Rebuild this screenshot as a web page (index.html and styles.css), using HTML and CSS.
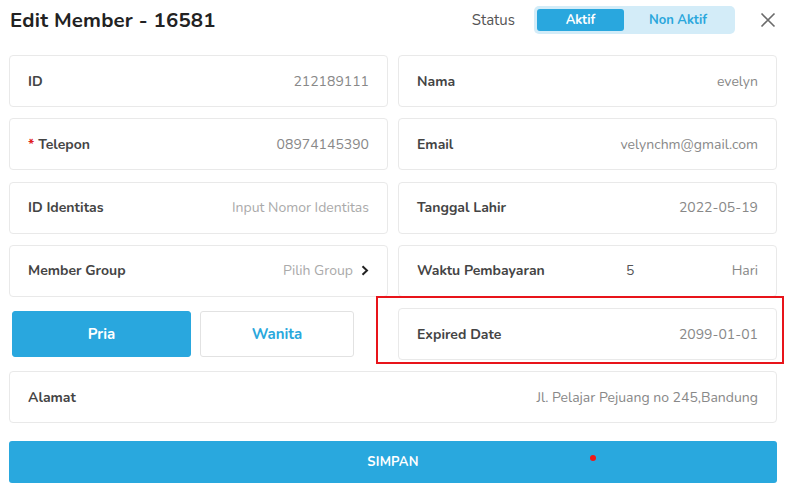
FILE: index.html
```html
<!DOCTYPE html>
<html lang="en">
<head>
  <meta charset="UTF-8">
  <meta name="viewport" content="width=device-width, initial-scale=1.0">
  <link rel="stylesheet" href="styles.css">
  <title>Edit Member</title>
</head>
<body>
  <div id="modal">
    <div class="header">
      <h1 class="title">Edit Member - 16581</h1>
      <div class="status">
        <span class="status-label">Status</span>
        <div class="switch">
          <div class="switch-opt active">Aktif</div>
          <div class="switch-opt">Non Aktif</div>
        </div>
        <svg class="close" width="16" height="16" viewBox="0 0 16 16">
          <path d="M1.5 1.5 L14.5 14.5 M14.5 1.5 L1.5 14.5" stroke="#6b6b6b" stroke-width="1.6" fill="none"/>
        </svg>
      </div>
    </div>

    <div class="form">
      <div class="field"><span class="label">ID</span><span class="value">212189111</span></div>
      <div class="field"><span class="label">Nama</span><span class="value">evelyn</span></div>

      <div class="field"><span class="label"><span class="req">*</span> Telepon</span><span class="value">08974145390</span></div>
      <div class="field"><span class="label">Email</span><span class="value">velynchm@gmail.com</span></div>

      <div class="field"><span class="label">ID Identitas</span><span class="value placeholder">Input Nomor Identitas</span></div>
      <div class="field"><span class="label">Tanggal Lahir</span><span class="value">2022-05-19</span></div>

      <div class="field">
        <span class="label">Member Group</span>
        <span class="value placeholder">Pilih Group
          <svg class="chev" width="8" height="11" viewBox="0 0 8 11">
            <path d="M1.5 1.2 L6 5.5 L1.5 9.8" stroke="#222" stroke-width="2" fill="none"/>
          </svg>
        </span>
      </div>
      <div class="field">
        <span class="label pay">Waktu Pembayaran</span>
        <span class="days">5</span>
        <span class="value">Hari</span>
      </div>

      <div class="gender">
        <div class="gender-btn selected">Pria</div>
        <div class="gender-btn">Wanita</div>
      </div>
      <div class="field"><span class="label">Expired Date</span><span class="value">2099-01-01</span></div>

      <div class="field wide"><span class="label">Alamat</span><span class="value">Jl. Pelajar Pejuang no 245,Bandung</span></div>
    </div>

    <button class="save">SIMPAN</button>

    <!-- annotation marks from the screenshot -->
    <div class="highlight"></div>
    <div class="dot"></div>
  </div>
</body>
</html>
```

FILE: styles.css
```css
body {
  margin: 0;
  background: #fff;
  font-family: "Nunito", Lato, "Noto Sans", sans-serif;
  color: #444;
}

#modal {
  position: relative;
  width: 790px;
  height: 502px;
}

.header {
  display: flex;
  align-items: center;
  justify-content: space-between;
  height: 39px;
  padding: 0 14px 0 10px;
}

.title {
  margin: 0;
  font-size: 20.4px;
  font-weight: 700;
  color: #222;
  letter-spacing: 0.2px;
}

.status {
  display: flex;
  align-items: center;
}

.status-label {
  font-size: 15px;
  color: #555;
  margin-right: 19px;
}

.switch {
  display: flex;
  background: #d3ecf8;
  border-radius: 5px;
  padding: 3px;
  width: 195px;
}

.switch-opt {
  flex: 1;
  height: 22px;
  line-height: 22px;
  text-align: center;
  font-size: 13px;
  font-weight: 700;
  color: #2aa7dc;
  border-radius: 3px;
}

.switch-opt.active {
  flex: 0 0 87px;
  background: #29a7de;
  color: #fff;
}

.close {
  margin-left: 25px;
}

.form {
  display: grid;
  grid-template-columns: 379px 379px;
  grid-auto-rows: 52px;
  column-gap: 10px;
  row-gap: 11.3px;
  padding: 16px 0 0 9px;
}

.field {
  display: flex;
  align-items: center;
  border: 1px solid #e9e9e9;
  border-radius: 4px;
  padding: 0 18px;
  box-sizing: border-box;
}

.field.wide {
  grid-column: 1 / 3;
}

.label {
  font-size: 14px;
  font-weight: 700;
  color: #444;
}

.label.pay {
  width: 209px;
}

.req {
  color: #e02020;
}

.value {
  margin-left: auto;
  font-size: 14px;
  color: #888;
  display: flex;
  align-items: center;
}

.value.placeholder {
  color: #aaa;
}

.chev {
  margin-left: 8px;
}

.days {
  font-size: 14px;
  color: #555;
}

.gender {
  display: flex;
  gap: 9px;
  padding: 3px 34px 0 3px;
  height: 46px;
}

.gender-btn {
  flex: 1;
  display: flex;
  align-items: center;
  justify-content: center;
  border: 1px solid #e2e2e2;
  border-radius: 3px;
  font-size: 15px;
  font-weight: 700;
  color: #2aa7dc;
  background: #fff;
}

.gender-btn.selected {
  flex: 0 0 179px;
  box-sizing: border-box;
  background: #29a7de;
  border-color: #29a7de;
  color: #fff;
}

.save {
  display: block;
  margin: 18px 0 0 9px;
  width: 768px;
  height: 42px;
  border: none;
  border-radius: 3px;
  background: #29a8de;
  color: #fff;
  font-family: inherit;
  font-size: 13px;
  font-weight: 700;
  letter-spacing: 0.2px;
}

.highlight {
  position: absolute;
  left: 376px;
  top: 296px;
  width: 404px;
  height: 64px;
  border: 2px solid #e8141a;
}

.dot {
  position: absolute;
  left: 590px;
  top: 455px;
  width: 6px;
  height: 6px;
  border-radius: 50%;
  background: #f01818;
}
```
